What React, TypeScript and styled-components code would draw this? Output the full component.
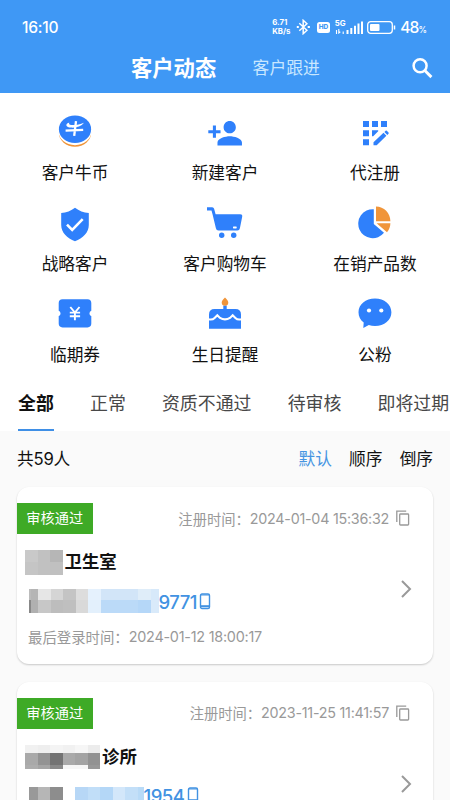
import React from 'react';
import styled, { createGlobalStyle } from 'styled-components';

const BLUE = '#2f80fb';
const ORANGE = '#f0953a';

const GlobalStyle = createGlobalStyle`
  * { box-sizing: border-box; }
  body {
    margin: 0;
    background: #fafafa;
    font-family: Inter, 'Noto Sans CJK SC', sans-serif;
    color: #111;
  }
  svg { display: block; flex: none; }
`;

const Screen = styled.main`
  width: 450px;
  height: 800px;
  overflow: hidden;
  display: flex;
  flex-direction: column;
  background: #fafafa;
  white-space: nowrap;
`;

const Header = styled.header`
  height: 93px;
  flex: none;
  background: #3f98f5;
  color: #fff;
`;

const StatusBar = styled.div`
  height: 54px;
  padding: 0 24px 0 22px;
  display: flex;
  align-items: center;
  justify-content: space-between;
`;

const Clock = styled.span`
  font-size: 15.6px;
  letter-spacing: -0.25px;
  font-weight: 450;
`;

const StatusIcons = styled.div`
  display: flex;
  align-items: center;
`;

const NetSpeed = styled.div`
  width: 20px;
  margin-right: 4px;
  display: flex;
  flex-direction: column;
  font-size: 7.8px;
  line-height: 9px;
  font-weight: 700;
`;

const HdBadge = styled.span`
  width: 12.5px;
  height: 11px;
  margin: 0 5px 0 6px;
  border-radius: 2.5px;
  background: #fff;
  color: #3f98f5;
  font-size: 6.5px;
  font-weight: 800;
  line-height: 11px;
  text-align: center;
`;

const BatteryText = styled.span`
  margin-left: 4px;
  font-size: 15.6px;
  letter-spacing: -0.9px;
  font-weight: 450;
  small { font-size: 8.5px; }
`;

const NavBar = styled.nav`
  height: 28px;
  padding: 0 17px 0 131px;
  display: flex;
  align-items: center;
`;

const NavTab = styled.span<{ $active?: boolean }>`
  font-size: ${p => (p.$active ? 21.3 : 16.8)}px;
  font-weight: ${p => (p.$active ? 700 : 400)};
  line-height: 28px;
  color: ${p => (p.$active ? '#fff' : '#c9e7ff')};
  margin-right: ${p => (p.$active ? '36.4px' : 'auto')};
`;

const Menu = styled.section`
  height: 282px;
  flex: none;
  padding-top: 18px;
  display: grid;
  grid-template-columns: repeat(3, 150px);
  grid-auto-rows: 90.8px;
  background: #fff;
`;

const MenuItem = styled.div`
  display: flex;
  flex-direction: column;
  align-items: center;
`;

const MenuLabel = styled.span`
  margin-top: 10px;
  font-size: 16.7px;
  line-height: 24px;
`;

const Tabs = styled.div`
  height: 56px;
  flex: none;
  padding-left: 18px;
  display: flex;
  gap: 36.2px;
  background: #fff;
`;

const Tab = styled.span<{ $active?: boolean }>`
  flex: none;
  height: 56px;
  font-size: 17.9px;
  line-height: 58px;
  font-weight: ${p => (p.$active ? 700 : 400)};
  color: ${p => (p.$active ? '#111' : '#484848')};
  box-shadow: ${p => (p.$active ? 'inset 0 -2px #3f8fe6' : 'none')};
`;

const SortBar = styled.div`
  height: 56px;
  flex: none;
  padding: 0 17px 2px;
  display: flex;
  align-items: center;
  font-size: 16.7px;
`;

const Total = styled.span`
  margin-right: auto;
  letter-spacing: -0.2px;
`;

const SortOption = styled.span<{ $active?: boolean }>`
  margin-left: 17.2px;
  color: ${p => (p.$active ? '#4695e2' : '#111')};
`;

const CardList = styled.div`
  flex: none;
  display: flex;
  flex-direction: column;
  gap: 17.5px;
  padding: 0 17px;
`;

const Card = styled.article`
  height: 177px;
  padding-top: 16px;
  border-radius: 12px;
  background: #fff;
  box-shadow: 0 1px 2px rgba(0, 0, 0, 0.2);
`;

const CardTop = styled.div`
  height: 31px;
  padding-right: 23px;
  display: flex;
  align-items: center;
  justify-content: space-between;
`;

const Badge = styled.span`
  width: 75.5px;
  height: 31px;
  line-height: 30px;
  text-align: center;
  background: #3eaa26;
  color: #fff;
  font-size: 14.2px;
`;

const Meta = styled.span`
  display: flex;
  align-items: center;
  padding-bottom: 1px;
  color: #999;
  font-size: 14.3px;
`;

const Stamp = styled.span<{ $gap: number }>`
  letter-spacing: -0.24px;
  margin-right: ${p => p.$gap}px;
`;

const CardBody = styled.div`
  display: flex;
  align-items: flex-start;
  justify-content: space-between;
  padding: 15px 21px 0 8px;
`;

const OpenButton = styled.div`
  padding-top: 30px;
`;

const NameRow = styled.div`
  height: 26px;
  display: flex;
  align-items: center;
  gap: 2px;
  font-size: 17.4px;
  line-height: 24px;
  font-weight: 600;
`;

const ContactRow = styled.div`
  height: 26px;
  margin-top: 13px;
  padding-left: 4px;
  display: flex;
  align-items: center;
  color: #4292e2;
  font-size: 18.5px;
  letter-spacing: -0.5px;
  font-weight: 500;
`;

const PhoneTail = styled.span`
  margin-right: 2.5px;
  padding-top: 1px;
`;

const LoginRow = styled.div`
  margin-top: 11px;
  padding-left: 3px;
  height: 22px;
  display: flex;
  align-items: center;
  color: #999;
  font-size: 14.4px;
`;

const Mosaic = styled.span<{ $rows: number[]; $cols: number[] }>`
  display: grid;
  grid-template-columns: ${p => p.$cols.map(c => `${c}px`).join(' ')};
  grid-template-rows: ${p => p.$rows.map(r => `${r}px`).join(' ')};
`;

const Tile = styled.i<{ $color: string }>`
  background: ${p => p.$color};
`;

type MosaicData = { rows: number[]; cols: number[]; colors: string[] };

const Redacted = ({ rows, cols, colors }: MosaicData) => (
  <Mosaic $rows={rows} $cols={cols}>
    {colors.map((c, i) => <Tile key={i} $color={c} />)}
  </Mosaic>
);

const Icon = ({ children }: { children: React.ReactNode }) => (
  <svg width="40" height="40" viewBox="0 0 40 40" fill={BLUE}>{children}</svg>
);

const CoinIcon = () => (
  <Icon>
    <ellipse cx="20" cy="21.8" rx="16.1" ry="14" fill={ORANGE} />
    <ellipse cx="20" cy="20.2" rx="16.5" ry="14" fill="#fff" />
    <ellipse cx="20" cy="18.3" rx="16.1" ry="13.8" />
    <path d="M21 10.200 19.200 24.900M10.600 19.700 28.200 18.900" stroke="#fff" strokeWidth="2.300" fill="none" />
    <path d="M11.300 14.200c.2-1.600 1.600-2.600 3-2.400-.7 1.200 0 2 2.100 2.200 4 .4 8.200-.5 12.600-2.200-2.700 3.600-8.200 5.200-12.800 4.800-2.600-.2-4.500-1-4.900-2.400z" fill="#fff" />
  </Icon>
);

const AddCustomerIcon = () => (
  <Icon>
    <path transform="translate(1.77 3.9) scale(1.53)" d="M15 12c2.21 0 4-1.79 4-4s-1.79-4-4-4-4 1.79-4 4 1.79 4 4 4zm-9-2V7H4v3H1v2h3v3h2v-3h3v-2H6zm9 4c-2.67 0-8 1.34-8 4v2h16v-2c0-2.66-5.33-4-8-4z" />
  </Icon>
);

const RegisterIcon = () => (
  <Icon>
    <path d="M8 10h6v6H8zM17 10h6v6h-6zM26 10h6v6h-6zM8 19.2h6v6H8zM8 28.3h6v6H8zM17 19.2h6.2v1l-5 5H17zM18.500 31.200 28.500 21.700l2.900 3-9.700 9.600h-3.200zM29.400 20.900l1.200-1.100q.6-.5 1.200 0l1.700 1.800q.5.600 0 1.200l-1.200 1.100z" />
  </Icon>
);

const ShieldIcon = () => (
  <Icon>
    <path d="M20 5.700c4 3 8.600 5 13.800 5.300v12c0 7.600-5.900 13.300-13.800 16.200C12.100 36.300 6.200 30.600 6.200 23V11C11.400 10.700 16 8.700 20 5.700z" />
    <path d="m12 22.600 5.200 5.200 10.500-10.700" fill="none" stroke="#fff" strokeWidth="2.600" />
  </Icon>
);

const CartIcon = () => (
  <Icon>
    <path d="M2 5.200h5.200q1.500 0 1.900 1.500l1.500 5.600h24.600q2.400 0 2 2.400l-2.300 11.600q-.4 2.200-2.500 2.200H13.500q-2.200 0-2.600-2.200L7.600 12.500 6.500 8.400H2z" />
    <circle cx="16.700" cy="33.200" r="2.700" />
    <circle cx="28.700" cy="33.200" r="2.700" />
    <rect x="28" y="24.500" width="3.700" height="1.900" rx=".6" fill="#fff" />
  </Icon>
);

const PieIcon = () => (
  <Icon>
    <path d="M18.800 7.200v14.900l10.200 8.700A14.500 14.500 0 1 1 18.800 7.200z" />
    <path d="M21 4.400c8 .2 14.400 6.500 14.400 14.800H21zM21.600 21.200h13.800c-.1 3.600-1.200 6.400-3.400 9z" fill={ORANGE} />
  </Icon>
);

const CouponIcon = () => (
  <Icon>
    <path d="M7.500 6.200h25a3.800 3.800 0 0 1 3.800 3.800v7.700a2.900 2.900 0 0 0 0 5.400v7.500a3.800 3.800 0 0 1-3.800 3.800h-25a3.800 3.800 0 0 1-3.800-3.800v-7.500a2.900 2.900 0 0 0 0-5.400V10a3.800 3.800 0 0 1 3.800-3.800z" />
    <path d="m15.300 14 4.600 5.500 4.600-5.500M14.800 19.600h10.300M14.800 23.200h10.300M19.900 19.500v7.800" fill="none" stroke="#fff" strokeWidth="1.900" />
  </Icon>
);

const CakeIcon = () => (
  <Icon>
    <path d="M4 35.700V21.500q0-5.500 5.500-5.500h8.800v-3.500h3.400V16h8.800q5.500 0 5.500 5.500v14.200z" />
    <path d="M20 4.500c2.200 2.300 3.300 3.700 3.300 5A3.300 3.300 0 0 1 20 12.700 3.300 3.300 0 0 1 16.700 9.500c0-1.300 1.100-2.700 3.300-5z" fill={ORANGE} />
    <path d="M4 26.300q3.400.8 5.600-1.400l2.700-2.600 2.700 2.600q5 3 10 0l2.700-2.600 2.700 2.600q2.200 2.200 5.600 1.400" fill="none" stroke="#fff" strokeWidth="2.100" />
  </Icon>
);

const ChatIcon = () => (
  <Icon>
    <path d="M20 5.400c9.400 0 16.400 5.900 16.400 13.900S29.400 33 20 33q-3.400 0-6.200-1L8.300 35l.4-5.500C5.300 27 3.500 23.400 3.500 19.300 3.500 11.300 10.600 5.400 20 5.400z" />
    <circle cx="14" cy="17.500" r="2.100" fill="#fff" />
    <circle cx="26.300" cy="17.500" r="2.100" fill="#fff" />
  </Icon>
);

const SearchIcon = () => (
  <svg width="22" height="22" viewBox="0 0 22 22" fill="none" stroke="#fff" strokeWidth="2.500">
    <circle cx="9.100" cy="8.700" r="6.500" />
    <path d="m13.600 13.300 6.800 6.800" strokeWidth="2.900" />
  </svg>
);

const BluetoothIcon = () => (
  <svg width="15" height="16" viewBox="0 0 15 16" fill="none" stroke="#fff" strokeWidth="1.500">
    <path d="m3.300 4.300 7.600 7L7.200 14.700V1.300l3.700 3.400-7.600 7" />
    <path d="M.8 8h2M11.700 8h2.200" strokeWidth="2" />
  </svg>
);

const SignalText = styled.span`
  height: 14px;
  display: flex;
  flex-direction: column;
  gap: 2px;
  font-size: 7.8px;
  line-height: 7px;
  font-weight: 700;
`;

const Signal = styled.div`
  width: 27px;
  margin-right: 5.5px;
  display: flex;
  align-items: flex-end;
`;

const SignalArrows = () => (
  <svg width="10" height="5" viewBox="0 0 10 5" stroke="#fff" fill="none" strokeWidth="1.100">
    <path d="M1.500 5V1M3.800 0v4l1.500-1.200M8.200 5V2.500" />
  </svg>
);

const SignalBars = () => (
  <svg width="17" height="13" viewBox="0 0 17 13" fill="#fff">
    <path d="M.5 9h2v4h-2zM4.300 7h2v6h-2zM8 4.800h2V13H8zM11.500 2.600h2V13h-2zM15 .5h2V13h-2z" />
  </svg>
);

const BatteryIcon = () => (
  <svg width="29" height="13" viewBox="0 0 29 13">
    <rect x=".7" y=".7" width="24.600" height="11.600" rx="3" fill="none" stroke="#fff" strokeWidth="1.300" />
    <rect x="3" y="3" width="9.500" height="7" rx="1" fill="#fff" />
    <path d="M27.500 4.500v4" stroke="#fff" strokeWidth="1.500" />
  </svg>
);

const CopyIcon = () => (
  <svg width="14" height="16" viewBox="0 0 14 16" fill="none" stroke="#999" strokeWidth="1.300">
    <path d="M.8 12V1.200h9.400" />
    <rect x="3.700" y="4" width="8.900" height="11" rx=".8" />
  </svg>
);

const PhoneIcon = () => (
  <svg width="12" height="17" viewBox="0 0 12 17" fill="none" stroke="#4292e2" strokeWidth="1.400">
    <rect x="1.500" y="1" width="9" height="14.500" rx="1.500" />
    <path d="M1.500 13.200h9" strokeWidth="2" />
    <path d="M1.500 2h9" strokeWidth="1" />
  </svg>
);

const ChevronIcon = () => (
  <svg width="12" height="20" viewBox="0 0 12 20" fill="none" stroke="#999" strokeWidth="2">
    <path d="m2 2 8 8-8 8" />
  </svg>
);

const menu = [
  { label: '客户牛币', icon: <CoinIcon /> },
  { label: '新建客户', icon: <AddCustomerIcon /> },
  { label: '代注册', icon: <RegisterIcon /> },
  { label: '战略客户', icon: <ShieldIcon /> },
  { label: '客户购物车', icon: <CartIcon /> },
  { label: '在销产品数', icon: <PieIcon /> },
  { label: '临期券', icon: <CouponIcon /> },
  { label: '生日提醒', icon: <CakeIcon /> },
  { label: '公粉', icon: <ChatIcon /> },
];

const customers = [
  {
    name: '卫生室',
    phone: '9771',
    registered: '2024-01-04 15:36:32',
    lastLogin: '2024-01-12 18:00:17',
    nameMask: {
      rows: [12.5, 12.5],
      cols: [12.5, 12.5, 12.5],
      colors: ['#c9c9c9', '#c1c1c1', '#b6b6b6', '#c5c5c5', '#c1c1c1', '#c0c0c0'],
    },
    phoneMask: {
      rows: [11, 12.5],
      cols: [1.5, 7.5, 12.5, 12.5, 12.5, 12.5, 12.5, 12.5, 12.5, 12.5, 12.5, 8],
      colors: [
        '#bbb', '#b5b5b5', '#e6e6e6', '#d5d5d5', '#c4c4c4', '#dddddd', '#e5f1fd', '#d2e5f8', '#d2e5f8', '#d2e5f8', '#dfedf9', '#d7e9fa',
        '#888', '#b0b0b0', '#c7c7c7', '#bdbdbd', '#bfbfbf', '#d9d9d9', '#e3f0fc', '#bbdaf8', '#bbdaf8', '#bbdaf8', '#b5d7f8', '#d9eafa',
      ],
    },
  },
  {
    name: '诊所',
    phone: '1954',
    registered: '2023-11-25 11:41:57',
    lastLogin: '',
    nameMask: {
      rows: [8, 12.5, 3.5],
      cols: [12.5, 12.5, 12.5, 12.5, 12.5, 12.5],
      colors: [
        '#f1f1f1', '#eeeeee', '#f4f4f4', '#f1f1f1', '#f6f6f6', '#ececec',
        '#a9a9a9', '#939393', '#737373', '#a9a9a9', '#a3a3a3', '#929292',
        '#adadad', '#a5a5a5', '#898989', '#f6f6f6', '#f6f6f6', '#989898',
      ],
    },
    phoneMask: {
      rows: [17.5],
      cols: [8.5, 12.5, 12.5, 12.5, 12.5, 12.5, 12.5, 12.5, 12.5, 6],
      colors: ['#999999', '#b6b6b6', '#8d8d8d', '#ffffff', '#b7d7f6', '#c1def8', '#b4d7f7', '#d3e7fa', '#c3dff8', '#b8daf7'],
    },
  },
];

export default function App() {
  return (
    <>
      <GlobalStyle />
      <Screen>
        <Header>
          <StatusBar>
            <Clock>16:10</Clock>
            <StatusIcons>
              <NetSpeed><span>6.71</span><span>KB/s</span></NetSpeed>
              <BluetoothIcon />
              <HdBadge>HD</HdBadge>
              <Signal>
                <SignalText>5G<SignalArrows /></SignalText>
                <SignalBars />
              </Signal>
              <BatteryIcon />
              <BatteryText>48<small>%</small></BatteryText>
            </StatusIcons>
          </StatusBar>
          <NavBar>
            <NavTab $active>客户动态</NavTab>
            <NavTab>客户跟进</NavTab>
            <SearchIcon />
          </NavBar>
        </Header>
        <Menu>
          {menu.map(item => (
            <MenuItem key={item.label}>
              {item.icon}
              <MenuLabel>{item.label}</MenuLabel>
            </MenuItem>
          ))}
        </Menu>
        <Tabs>
          {['全部', '正常', '资质不通过', '待审核', '即将过期'].map((t, i) => (
            <Tab key={t} $active={i === 0}>{t}</Tab>
          ))}
        </Tabs>
        <SortBar>
          <Total>共59人</Total>
          <SortOption $active>默认</SortOption>
          <SortOption>顺序</SortOption>
          <SortOption>倒序</SortOption>
        </SortBar>
        <CardList>
          {customers.map(c => (
            <Card key={c.name}>
              <CardTop>
                <Badge>审核通过</Badge>
                <Meta>
                  注册时间：
                  <Stamp $gap={7}>{c.registered}</Stamp>
                  <CopyIcon />
                </Meta>
              </CardTop>
              <CardBody>
                <div>
                  <NameRow><Redacted {...c.nameMask} />{c.name}</NameRow>
                  <ContactRow>
                    <Redacted {...c.phoneMask} />
                    <PhoneTail>{c.phone}</PhoneTail>
                    <PhoneIcon />
                  </ContactRow>
                  {c.lastLogin && (
                    <LoginRow>最后登录时间：<Stamp $gap={0}>{c.lastLogin}</Stamp></LoginRow>
                  )}
                </div>
                <OpenButton><ChevronIcon /></OpenButton>
              </CardBody>
            </Card>
          ))}
        </CardList>
      </Screen>
    </>
  );
}
